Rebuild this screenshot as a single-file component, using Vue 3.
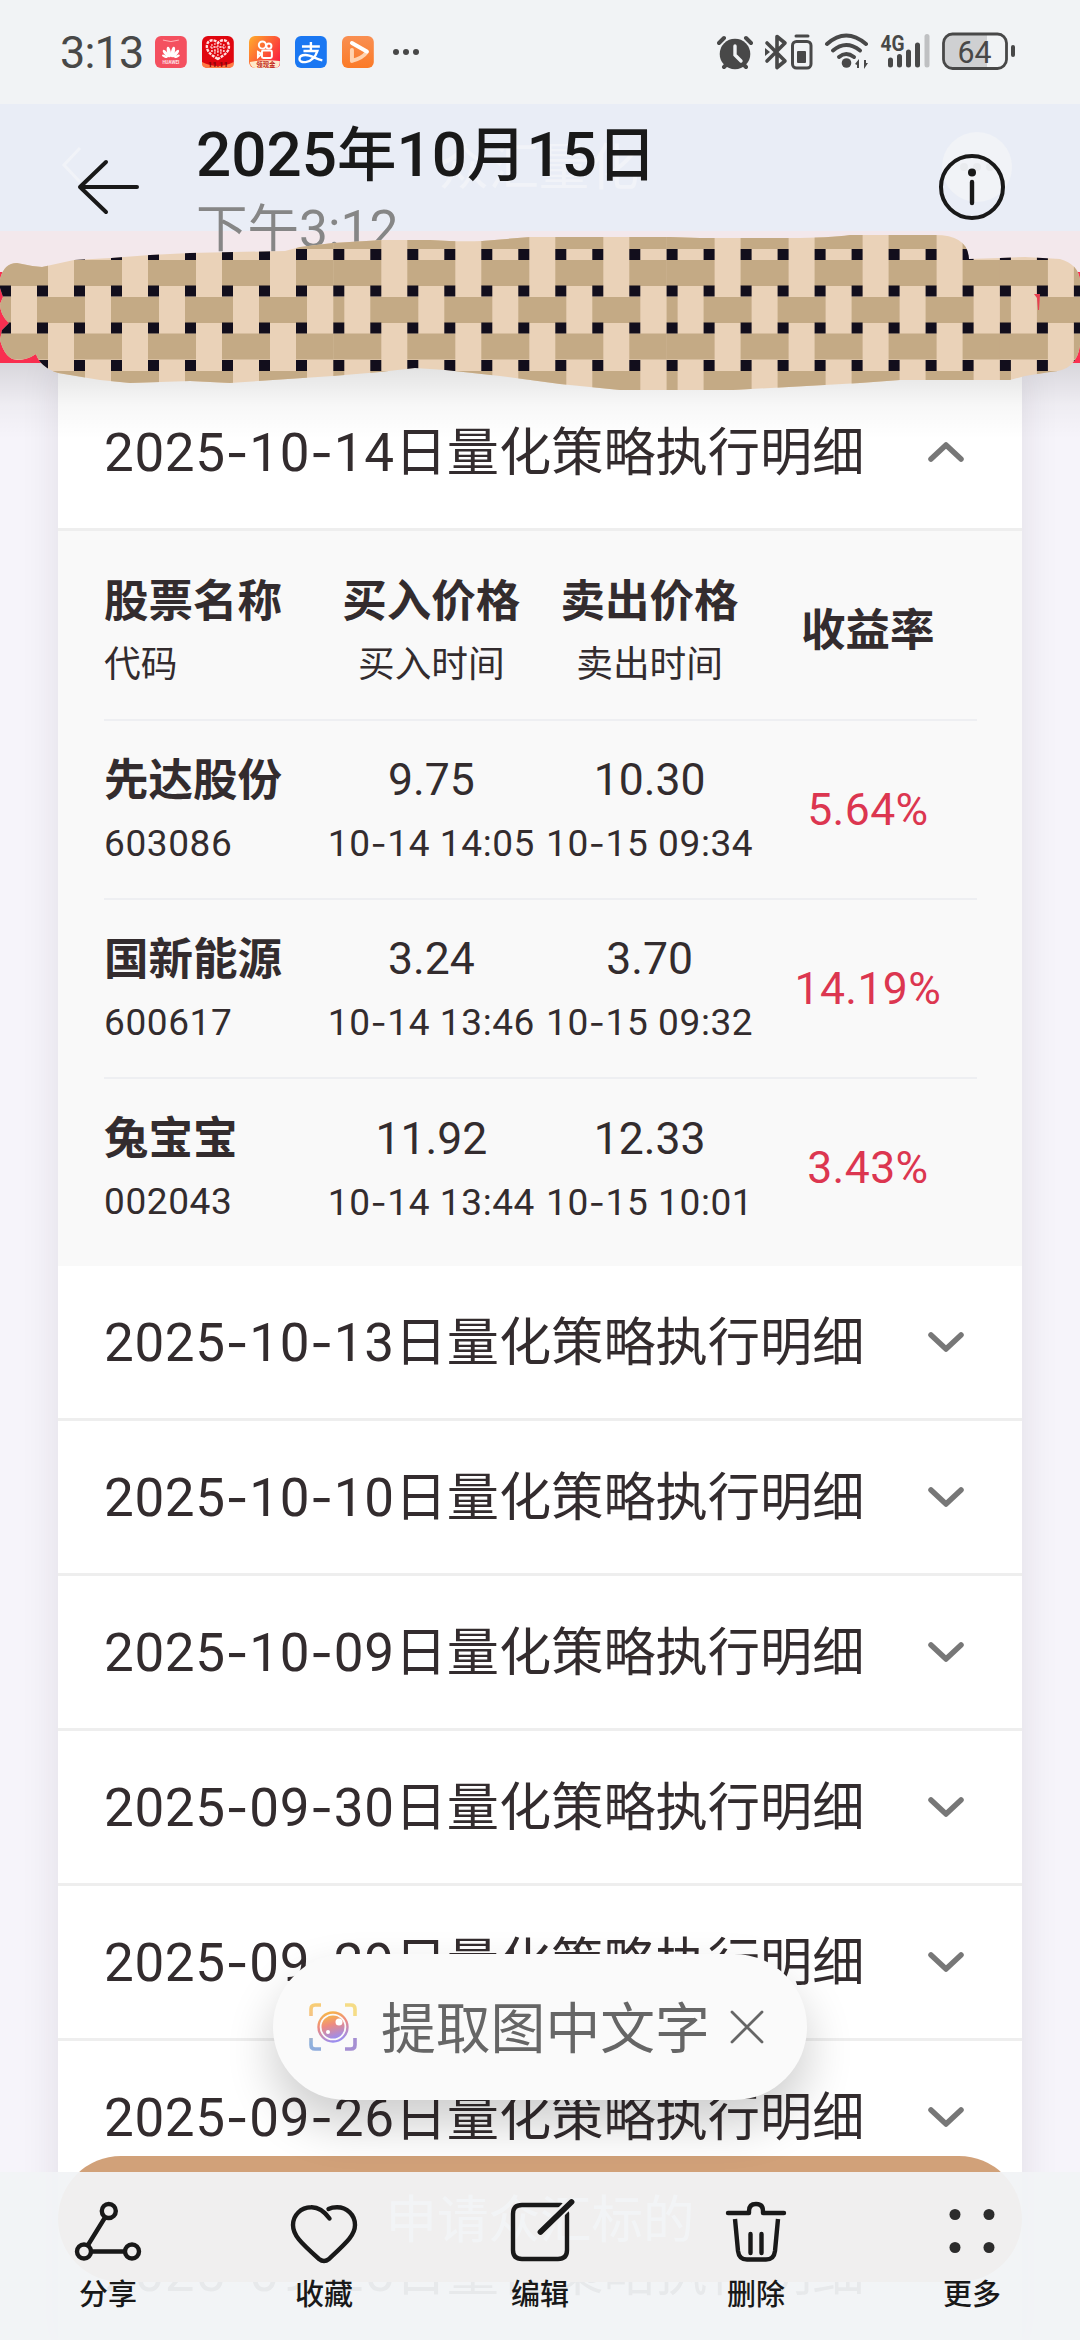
<template>
  <div class="screen">
    <div class="status-bar">
      <span class="clock">3:13</span>
      <div class="app-icons">
        <svg class="app-icon" viewBox="0 0 32 32">
          <rect width="32" height="32" rx="6" fill="#f4505f" />
          <path d="M8 4q8 3 16 0" fill="none" stroke="#ffb3b8" stroke-width="1" />
          <g fill="#fff">
            <ellipse cx="14" cy="16" rx="1.9" ry="5.5" transform="rotate(-12 14 16)" />
            <ellipse cx="18" cy="16" rx="1.9" ry="5.5" transform="rotate(12 18 16)" />
            <ellipse cx="11" cy="17.5" rx="1.7" ry="4.6" transform="rotate(-38 11 17.5)" />
            <ellipse cx="21" cy="17.5" rx="1.7" ry="4.6" transform="rotate(38 21 17.5)" />
            <ellipse cx="9.8" cy="20.3" rx="1.2" ry="3" transform="rotate(-68 9.8 20.3)" />
            <ellipse cx="22.2" cy="20.3" rx="1.2" ry="3" transform="rotate(68 22.2 20.3)" />
          </g>
          <text x="16" y="28" font-size="4.6" font-weight="700" fill="#ffe3e5" text-anchor="middle">HUAWEI</text>
        </svg>
        <svg class="app-icon" viewBox="0 0 32 32">
          <rect width="32" height="32" rx="6" fill="#e0060f" />
          <path d="M0 26q16 8 32 0v2q0 4-6 4H6q-6 0-6-4z" fill="#ff7a45" />
          <path d="M16 23C9 19 4 15 5 9c1-6 8-6 11-2 3-4 10-4 11 2 1 6-4 10-11 14z" fill="none" stroke="#ffe0e0" stroke-width="2.4" stroke-dasharray="3 1" />
          <path d="M10 8v8M13 7v11M16 9v12M19 7v11M22 8v8M8 11h16M9 15h14" stroke="#ffe0e0" stroke-width="1.1" stroke-dasharray="2 1" />
          <text x="16" y="31" font-size="8" font-weight="700" fill="#7d0808" text-anchor="middle">11.11</text>
        </svg>
        <svg class="app-icon" viewBox="0 0 32 32">
          <defs>
            <linearGradient id="ks" x1="0" y1="0" x2="1" y2=".7">
              <stop offset="0" stop-color="#ffae2b" />
              <stop offset="1" stop-color="#fb1f3f" />
            </linearGradient>
          </defs>
          <rect width="32" height="32" rx="6" fill="url(#ks)" />
          <g fill="none" stroke="#fff" stroke-width="2">
            <circle cx="13.500" cy="9" r="3.600" />
            <circle cx="20" cy="10" r="2.600" />
            <rect x="13" y="14.500" width="10" height="7.500" rx="1.500" />
            <path d="M12.500 18L9 16v5z" />
          </g>
          <path d="M1 26q14-3 30-1v2q0 5-6 5H7q-5 0-6-5z" fill="#ffe9c9" />
          <text x="17" y="31" font-size="6.500" font-weight="700" fill="#c22a1c" text-anchor="middle">领现金</text>
        </svg>
        <svg class="app-icon" viewBox="0 0 32 32">
          <rect width="32" height="32" rx="6" fill="#1a77f2" />
          <path d="M7 10.500h18M16 6v9M8.500 15h14q-3 9-11 11-7 1-7-3 0-4 6-4c6 0 10 4 17 5.500" fill="none" stroke="#fff" stroke-width="2.400" />
        </svg>
        <svg class="app-icon" viewBox="0 0 32 32">
          <defs>
            <linearGradient id="vd" x1="0" y1="0" x2="0" y2="1">
              <stop offset="0" stop-color="#f98f52" />
              <stop offset="1" stop-color="#fb7a27" />
            </linearGradient>
          </defs>
          <rect width="32" height="32" rx="6" fill="url(#vd)" />
          <path d="M10 14v11q11-3 15-9" fill="none" stroke="#ffd3b0" stroke-width="4" stroke-linecap="round" stroke-linejoin="round" />
          <path d="M10 7l15 8.500" stroke="#fff" stroke-width="4" stroke-linecap="round" />
        </svg>
      </div>
      <svg class="more-dots" viewBox="0 0 28 8" fill="#484848">
        <circle cx="4" cy="4" r="3" /><circle cx="14" cy="4" r="3" /><circle cx="24" cy="4" r="3" />
      </svg>
      <svg class="sys-icons" viewBox="0 0 300 40">
        <!-- alarm -->
        <circle cx="18" cy="22" r="15.300" fill="#484848" />
        <path d="M2 11l5-5M34 11l-5-5M7 35l3-3M29 35l-3-3" stroke="#484848" stroke-width="4" stroke-linecap="round" />
        <path d="M18 14v9l6 6" fill="none" stroke="#f1f3f5" stroke-width="3.400" stroke-linecap="round" />
        <!-- bluetooth -->
        <path d="M50 11l18 18-8 6.500V4.500l8 6.500-18 18" fill="none" stroke="#484848" stroke-width="3.600" stroke-linejoin="round" stroke-linecap="round" />
        <path d="M48 16l5 4-5 4z" fill="#484848" />
        <rect x="75.500" y="9.500" width="18.500" height="26.500" rx="4" fill="none" stroke="#484848" stroke-width="3" />
        <path d="M79 4h12" stroke="#484848" stroke-width="3" stroke-linecap="round" />
        <rect x="80" y="19" width="9" height="12" rx="1" fill="#484848" />
        <!-- wifi -->
        <g fill="none" stroke="#484848" stroke-width="4" stroke-linecap="round">
          <path d="M110 12q19-17 39 0" />
          <path d="M116 18.500q13-11 27 0" />
          <path d="M122 25q7-6 15 0" />
        </g>
        <circle cx="129.500" cy="31" r="4.800" fill="#484848" />
        <path d="M138 32l4-5v9h-2v-3zM149 31h2l-4 6v-9h2z" fill="#484848" />
        <!-- signal -->
        <text x="163.500" y="18.500" font-size="22" font-weight="700" textLength="24" lengthAdjust="spacingAndGlyphs" fill="#484848">4G</text>
        <g stroke="#484848" stroke-width="5" stroke-linecap="round">
          <path d="M173.500 28v5M182.500 24.500v8.500M191.500 20v13M200.500 13v20" />
          <path d="M210 4.500v28.500" stroke="#bfc0c2" />
        </g>
        <!-- battery -->
        <rect x="226.500" y="2" width="63" height="34.500" rx="9" fill="#f1f3f5" />
        <path d="M235 3h35v33h-35q-7 0-7-8V11q0-8 7-8z" fill="#cfd0d2" />
        <rect x="226.500" y="2" width="63" height="34.500" rx="9" fill="none" stroke="#484848" stroke-width="2.800" />
        <path d="M296 15v8" stroke="#484848" stroke-width="4" stroke-linecap="round" />
        <text x="257.500" y="30.500" font-size="32" fill="#484848" text-anchor="middle" textLength="34" lengthAdjust="spacingAndGlyphs">64</text>
      </svg>
    </div>

    <header class="header">
      <span class="ghost-title">众汇量化</span>
      <svg class="ghost-back" viewBox="0 0 24 40"><path d="M20 3L4 20l16 17" fill="none" stroke="#f1f3f8" stroke-width="3" /></svg>
      <div class="ghost-avatar"><i></i><i></i><i></i></div>
      <svg class="back" viewBox="0 0 64 60">
        <path d="M30 5L4 30l26 25M5 30h56" fill="none" stroke="#191919" stroke-width="4" stroke-linecap="round" stroke-linejoin="round" />
      </svg>
      <div class="heading">
        <h1>2025<b>年</b>10<b>月</b>15<b>日</b></h1>
        <p><b>下午</b>3:12</p>
      </div>
      <svg class="info" viewBox="0 0 70 70">
        <circle cx="35" cy="35" r="31" fill="none" stroke="#191919" stroke-width="4" />
        <circle cx="35" cy="20.500" r="4" fill="#191919" />
        <path d="M35 30v21" stroke="#191919" stroke-width="4.400" stroke-linecap="round" />
      </svg>
    </header>

    <!-- woven mosaic brush over the banner -->
    <svg class="weave" viewBox="0 230 1080 170">
      <defs>
        <clipPath id="brush">
          <path d="M0 279Q4 263 17 263Q30 266 42 267L74 260L111 258L150 255L190 253L285 251L300 247L333 243L383 240H430Q460 242 482 241L530 237H670L700 238H790Q830 238 850 235H935Q968 235 969 259L1000 258L1025 257L1060 259Q1078 264 1080 280V345Q1077 371 1050 372L1025 376L1010 380H900L860 383L733 390H620L560 384L500 376L445 370L415 368L380 372L333 376L230 383L190 381L130 383L100 380L58 373Q40 367 36 354Q27 360 17 360Q5 359 0 340L2 330L9 323Q0 315 0 304L3 297L0 288Z" />
        </clipPath>
      </defs>
      <g clip-path="url(#brush)">
        <rect y="230" width="1080" height="170" fill="#ead2b8" />
        <rect v-for="(r, i) in straps" :key="'s' + i" :x="r.x" :y="r.y" :width="r.w" height="26" fill="#c4aa85" />
        <rect v-for="(k, i) in knots" :key="'k' + i" :x="k.x" :y="k.y" width="11" height="11" fill="#120e1c" />
        <path d="M1034 294h6l-1 16h-1l-1-12z" fill="#e84050" />
      </g>
    </svg>

    <main class="card">
      <section v-for="day in days" :key="day.date" class="day">
        <div class="day-title">
          <span class="day-text"><NumText :text="day.date" /><b>日量化策略执行明细</b></span>
          <svg class="chevron" viewBox="0 0 40 26">
            <path :d="day.rows ? 'M5 20L20 6l15 14' : 'M5 6l15 14L35 6'" fill="none" stroke="#777" stroke-width="5.500" stroke-linecap="round" stroke-linejoin="round" />
          </svg>
        </div>
        <div v-if="day.rows" class="detail">
          <div class="row head">
            <div class="cell name"><strong>股票名称</strong><small>代码</small></div>
            <div class="cell"><strong>买入价格</strong><small>买入时间</small></div>
            <div class="cell"><strong>卖出价格</strong><small>卖出时间</small></div>
            <div class="cell"><strong>收益率</strong></div>
          </div>
          <div v-for="r in day.rows" :key="r.code" class="row">
            <div class="cell name"><strong>{{ r.name }}</strong><em>{{ r.code }}</em></div>
            <div class="cell"><span>{{ r.buy }}</span><em><NumText :text="r.buyTime" /></em></div>
            <div class="cell"><span>{{ r.sell }}</span><em><NumText :text="r.sellTime" /></em></div>
            <div class="cell"><span class="rate">{{ r.rate }}</span></div>
          </div>
        </div>
      </section>
    </main>

    <button class="apply">申请众汇标的</button>

    <div class="extract">
      <svg class="extract-icon" viewBox="0 0 50 50">
        <defs>
          <linearGradient id="fr" gradientUnits="userSpaceOnUse" x1="10" y1="0" x2="20" y2="50">
            <stop offset="0" stop-color="#f8cf73" />
            <stop offset=".4" stop-color="#f2b98f" />
            <stop offset=".75" stop-color="#8fb2dd" />
            <stop offset="1" stop-color="#8ea9dc" />
          </linearGradient>
          <linearGradient id="lens" x1=".3" y1="0" x2=".6" y2="1">
            <stop offset="0" stop-color="#f6b54a" />
            <stop offset=".4" stop-color="#ee8a80" />
            <stop offset="1" stop-color="#9a8df0" />
          </linearGradient>
        </defs>
        <g fill="none" stroke-width="3.600">
          <path d="M3 14V7q0-4 4-4h6M3 36v7q0 4 4 4h6" stroke="url(#fr)" />
          <path d="M37 3h6q4 0 4 4v7" stroke="#f5dc86" />
          <path d="M37 47h6q4 0 4-4v-7" stroke="#a58fd2" />
        </g>
        <circle cx="25" cy="25" r="14.500" fill="none" stroke="url(#lens)" stroke-width="2.400" />
        <circle cx="25" cy="25" r="11.500" fill="url(#lens)" />
        <circle cx="31" cy="20" r="3.500" fill="#fff" />
        <circle cx="20" cy="30" r="2" fill="#fff" />
      </svg>
      <span>提取图中文字</span>
      <svg class="close" viewBox="0 0 36 36"><path d="M3 3l30 30M33 3L3 33" stroke="#666" stroke-width="2.800" stroke-linecap="round" /></svg>
    </div>

    <nav class="toolbar">
      <div v-for="t in tools" :key="t.label" class="tool">
        <svg viewBox="0 0 72 72" fill="none" stroke="#191919" stroke-width="4.400" stroke-linecap="round" stroke-linejoin="round">
          <template v-if="t.icon === 'share'">
            <circle cx="36.800" cy="15" r="7" /><circle cx="12" cy="55.500" r="7" /><circle cx="60" cy="55.500" r="7" />
            <path d="M33 21.500L16 49M19.500 55.500h33" />
          </template>
          <path v-if="t.icon === 'heart'" d="M41.500 22.500C36 15 30 11 23 11.300C13 11.500 5 19 5 29c0 10 7 17 26 34q5 4 10 0C59 46 67 39 67 29c0-10-8-17.700-18-17.700q-5 0-8.500 1.700" />
          <template v-if="t.icon === 'edit'">
            <path d="M57 9H18Q9 9 9 18V54Q9 63 18 63H54Q63 63 63 54V17" />
            <path d="M69 4L35 38" stroke="#efefef" stroke-width="10" stroke-linecap="butt" />
            <path d="M67.500 6L36.500 36" stroke-width="5.800" />
          </template>
          <template v-if="t.icon === 'trash'">
            <path d="M8 17h21v-2q0-7 7-7t7 7v2h21M30.500 38v19M41.500 38v19" />
            <path d="M15 23l3 32q1 8.500 9 8.500h19q8 0 9-8.500l3-32" stroke-linecap="butt" />
          </template>
          <g v-if="t.icon === 'more'" fill="#2c2c2c" stroke="none">
            <circle cx="19" cy="18.500" r="5.500" /><circle cx="53" cy="18.500" r="5.500" />
            <circle cx="19" cy="51.500" r="5.500" /><circle cx="53" cy="51.500" r="5.500" />
          </g>
        </svg>
        <span>{{ t.label }}</span>
      </div>
    </nav>
  </div>
</template>

<script setup>
import { h } from 'vue'

const NumText = (props) =>
  h('span', { class: 'num' }, props.text.split(/(-)/).map((s) => (s === '-' ? h('i', { class: 'dash' }, s) : s)))
NumText.props = ['text']

const days = [
  {
    date: '2025-10-14',
    rows: [
      { name: '先达股份', code: '603086', buy: '9.75', buyTime: '10-14 14:05', sell: '10.30', sellTime: '10-15 09:34', rate: '5.64%' },
      { name: '国新能源', code: '600617', buy: '3.24', buyTime: '10-14 13:46', sell: '3.70', sellTime: '10-15 09:32', rate: '14.19%' },
      { name: '兔宝宝', code: '002043', buy: '11.92', buyTime: '10-14 13:44', sell: '12.33', sellTime: '10-15 10:01', rate: '3.43%' }
    ]
  },
  { date: '2025-10-13' },
  { date: '2025-10-10' },
  { date: '2025-10-09' },
  { date: '2025-09-30' },
  { date: '2025-09-29' },
  { date: '2025-09-26' },
  { date: '2025-09-25' }
]

const tools = [
  { icon: 'share', label: '分享' },
  { icon: 'heart', label: '收藏' },
  { icon: 'edit', label: '编辑' },
  { icon: 'trash', label: '删除' },
  { icon: 'more', label: '更多' }
]

// weave texture, repeated every 333px
const straps = []
const knots = []
for (let t = 0; t < 4; t++) {
  const ox = t * 333.3
  for (const y of [223, 260, 333.500]) {
    for (let i = 0; i < 4; i++) straps.push({ x: ox + i * 74, y, w: 48 })
    straps.push({ x: ox + 296, y, w: 37.500 })
  }
  for (const y of [297, 371]) {
    straps.push({ x: ox, y, w: 11 })
    for (let i = 0; i < 4; i++) straps.push({ x: ox + 37 + i * 74, y, w: 48 })
  }
  for (const y of [249, 285.500, 322.500, 360]) {
    for (let i = 0; i < 9; i++) knots.push({ x: ox + i * 37, y })
  }
}
</script>

<style>
body { margin: 0; }
.num { letter-spacing: 0.6px; }
.num .dash { font-family: Inter, sans-serif; font-style: normal; font-size: 0.95em; }
</style>

<style scoped>
.screen {
  position: relative; width: 1080px; height: 2340px; overflow: hidden;
  background: #f6f4fa; color: #332c2e;
  font-family: Roboto, "Noto Sans CJK SC", sans-serif;
}
b { font-weight: inherit; }

.status-bar {
  display: flex; align-items: center; height: 104px; box-sizing: border-box;
  padding-left: 60px; background: #f1f3f5;
}
.clock { width: 95px; font-size: 45px; line-height: 60px; padding-top: 2px; color: #484848; letter-spacing: -0.8px; }
.app-icons { display: flex; gap: 15px; }
.app-icon { width: 31.800px; height: 32px; }
.more-dots { width: 28px; height: 8px; margin-left: 18px; }
.sys-icons { width: 300px; height: 40px; margin-left: 297px; }

.header {
  position: relative; display: flex; height: 259px; box-sizing: border-box;
  padding: 26px 73px 0 76px;
  background: linear-gradient(#e9edf6 0 127px, #f3e8ec 127px 168px, #f92f50 168px);
}
.header > svg { flex: none; }
.back { width: 64px; height: 60px; margin-top: 27px; }
.heading { flex: 1; margin-left: 56px; position: relative; }
.heading h1 { margin: 0; font-size: 62px; line-height: 50px; font-weight: 500; color: #191919; white-space: nowrap; }
.heading h1 b { font-size: 59.500px; }
.heading p { margin: 24px 0 0; font-size: 51.500px; line-height: 50px; color: #868686; }
.info { position: relative; width: 70px; height: 70px; margin-top: 22px; }
.ghost-title { position: absolute; left: 439px; top: 39px; font-size: 50px; line-height: 50px; color: #f1f3f8; }
.ghost-back { position: absolute; left: 60px; top: 41px; width: 24px; height: 40px; }
.ghost-avatar {
  position: absolute; left: 942px; top: 28px; width: 70px; height: 70px; border-radius: 50%;
  background: #f1f3f7; display: flex; justify-content: center; gap: 5px;
}
.ghost-avatar i { width: 8px; height: 8px; margin-top: 31px; border-radius: 50%; background: #e9ebee; }
.weave { position: absolute; left: 0; top: 230px; width: 1080px; height: 170px; z-index: 3; }

.card {
  position: relative; width: 964px; margin: 0 auto; padding-top: 13px; background: #fff;
  box-shadow: 0 0 36px rgba(40, 30, 60, 0.1);
}
.card::before {
  content: ""; position: absolute; left: -58px; right: -58px; top: 0; height: 76px;
  background: linear-gradient(rgba(0, 0, 0, 0.12), rgba(0, 0, 0, 0.03) 55%, transparent);
}
.day-title {
  display: flex; align-items: center; justify-content: space-between; height: 155px;
  box-sizing: border-box; border-bottom: 3px solid #eee; padding: 0 56px 0 46px;
  font-size: 53px; white-space: nowrap;
}
.day-text { padding-bottom: 9px; }
.day-title b { font-size: 52.200px; }
.chevron { width: 40px; height: 26px; }
.detail { background: #f9f9f9; padding: 11px 45px 9px 46px; }
.row { display: grid; grid-template-columns: repeat(4, 1fr); height: 179px; box-sizing: border-box; border-bottom: 2px solid #eeeff2; }
.row:last-child { border-bottom: 0; height: 178px; }
.cell { display: flex; flex-direction: column; align-items: center; justify-content: center; white-space: nowrap; min-width: 0; }
.cell.name { align-items: flex-start; }
.cell strong, .cell span { font-size: 44.500px; line-height: 68px; }
.cell small { font-size: 36.700px; line-height: 58px; }
.cell em { font-size: 37px; line-height: 58px; font-style: normal; letter-spacing: 0.6px; }
.cell em span { font-size: 37px; line-height: 58px; }
.cell .rate { color: #dc3650; letter-spacing: 0.4px; }

.apply {
  position: absolute; left: 58px; top: 2156px; width: 964px; height: 126px; border: 0; border-radius: 63px;
  padding: 0 0 8px; background: #d1a179; color: #fff; font: 51.500px "Noto Sans CJK SC", sans-serif;
}
.extract {
  position: absolute; left: 273px; top: 1954px; width: 534px; height: 146px; box-sizing: border-box;
  display: flex; align-items: center; padding: 0 42px 0 35px; border-radius: 73px;
  background: #fafafa; box-shadow: 0 24px 48px rgba(0, 0, 0, 0.2); color: #666; font-size: 54.800px;
}
.extract span { padding-bottom: 6px; }
.extract-icon { width: 50px; height: 50px; margin-right: 23px; }
.close { width: 36px; height: 36px; margin-left: auto; }

.toolbar {
  position: absolute; left: 0; bottom: 0; width: 1080px; height: 168px; display: flex;
  background: rgba(241, 243, 246, 0.95);
}
.tool { flex: 1; display: flex; flex-direction: column; align-items: center; padding-top: 24px; color: #191919; font-size: 29px; font-weight: 500; line-height: 36px; }
.tool svg { width: 72px; height: 72px; margin-bottom: 9px; }
</style>
